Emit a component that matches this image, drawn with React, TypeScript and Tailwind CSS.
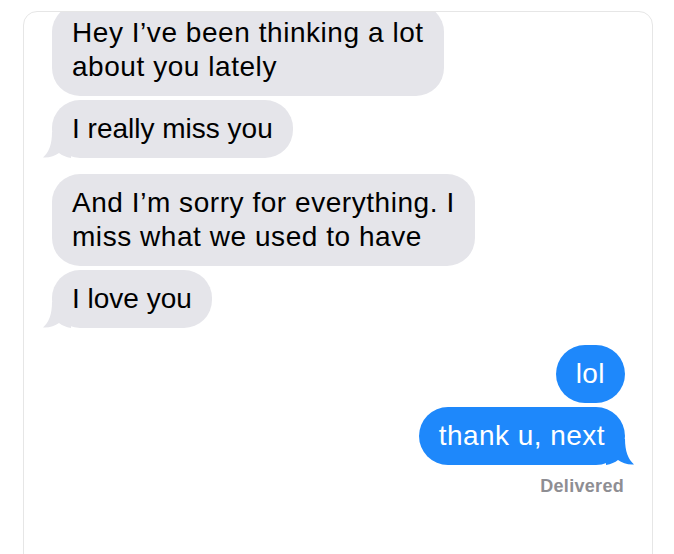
import React from "react";

function TailLeft() {
  return (
    <svg
      className="absolute left-[-9px] bottom-0"
      width="28"
      height="26"
      viewBox="0 0 28 26"
      fill="#e5e5ea"
    >
      <path d="M9 0 C9 12 6 20 0 25.5 C6 26 12 24 16 21 C19 23.5 23 25 28 26 L28 0 Z" />
    </svg>
  );
}

function TailRight() {
  return (
    <svg
      className="absolute right-[-9px] bottom-0"
      width="28"
      height="26"
      viewBox="0 0 28 26"
      fill="#1e88fb"
    >
      <path d="M19 0 C19 12 22 20 28 25.5 C22 26 16 24 12 21 C9 23.5 5 25 0 26 L0 0 Z" />
    </svg>
  );
}

function Received({
  children,
  tail,
  wide,
}: {
  children: React.ReactNode;
  tail?: boolean;
  wide?: boolean;
}) {
  return (
    <div
      className={
        wide
          ? "relative w-fit rounded-[28px] bg-[#e5e5ea] px-[20px] py-[12px] text-[28px] leading-[34px] tracking-[0.55px] text-black whitespace-nowrap"
          : "relative w-fit rounded-[28px] bg-[#e5e5ea] px-[20px] py-[12px] text-[28px] leading-[34px] text-black whitespace-nowrap"
      }
    >
      {tail && <TailLeft />}
      <span className="relative">{children}</span>
    </div>
  );
}

function Sent({ children, tail }: { children: React.ReactNode; tail?: boolean }) {
  return (
    <div className="relative w-fit self-end rounded-[29px] bg-[#1e88fb] px-[20px] py-[12px] text-[28px] leading-[34px] tracking-[0.45px] text-white whitespace-nowrap">
      {tail && <TailRight />}
      <span className="relative">{children}</span>
    </div>
  );
}

export default function App() {
  return (
    <div
      className="min-h-[554px] bg-white pl-[23px] pr-[21px] pt-[11px]"
      style={{ fontFamily: '"Liberation Sans", Arial, sans-serif' }}
    >
      <div className="h-[560px] overflow-hidden rounded-t-[14px] border border-[#e6e6e6] bg-white">
        <div className="mt-[-8px] flex flex-col pl-[28px] pr-[27px]">
          <div className="flex flex-col gap-[4px]">
            <Received wide>
              Hey I’ve been thinking a lot
              <br />
              about you lately
            </Received>
            <Received tail>I really miss you</Received>
          </div>
          <div className="mt-[16px] flex flex-col gap-[4px]">
            <Received wide>
              And I’m sorry for everything. I
              <br />
              miss what we used to have
            </Received>
            <Received tail>I love you</Received>
          </div>
          <div className="mt-[17px] flex flex-col gap-[4px]">
            <Sent>lol</Sent>
            <Sent tail>thank u, next</Sent>
          </div>
          <div className="mt-[9px] self-end pr-[1px] text-[18px] font-bold leading-[24px] tracking-[0.3px] text-[#8e8e93]">
            Delivered
          </div>
        </div>
      </div>
    </div>
  );
}
